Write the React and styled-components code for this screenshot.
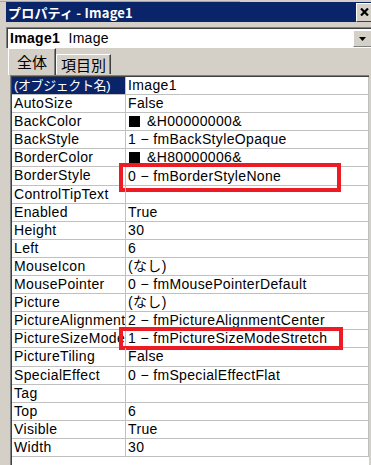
import React from "react";
import styled, { createGlobalStyle } from "styled-components";

const GlobalStyle = createGlobalStyle`
  html, body {
    margin: 0;
    padding: 0;
    background: #d4d0c8;
  }
  body {
    font-family: "Liberation Sans", "Noto Sans CJK JP", sans-serif;
  }
`;

const rows = [
  { name: "(オブジェクト名)", value: "Image1", selected: true, jpName: true },
  { name: "AutoSize", value: "False" },
  { name: "BackColor", value: "&H00000000&", swatch: true },
  { name: "BackStyle", value: "1 − fmBackStyleOpaque" },
  { name: "BorderColor", value: "&H80000006&", swatch: true },
  { name: "BorderStyle", value: "0 − fmBorderStyleNone", mark: { top: -4, height: 29, width: 222 } },
  { name: "ControlTipText", value: "" },
  { name: "Enabled", value: "True" },
  { name: "Height", value: "30" },
  { name: "Left", value: "6" },
  { name: "MouseIcon", value: "(なし)" },
  { name: "MousePointer", value: "0 − fmMousePointerDefault" },
  { name: "Picture", value: "(なし)" },
  { name: "PictureAlignment", value: "2 − fmPictureAlignmentCenter" },
  { name: "PictureSizeMode", value: "1 − fmPictureSizeModeStretch", mark: { top: -3, height: 23, width: 224 } },
  { name: "PictureTiling", value: "False" },
  { name: "SpecialEffect", value: "0 − fmSpecialEffectFlat" },
  { name: "Tag", value: "" },
  { name: "Top", value: "6" },
  { name: "Visible", value: "True" },
  { name: "Width", value: "30" },
];

const App = () => {
  return (
    <>
      <GlobalStyle />
      <Window>
        <TopEdge />
        <TitleBar>
          <Title>プロパティ - Image1</Title>
          <CloseButton>
            <svg width="9" height="8" viewBox="0 0 9 8">
              <path d="M1 0.5l7 7M8 0.5l-7 7" stroke="#000" strokeWidth="2.2" />
            </svg>
          </CloseButton>
        </TitleBar>
        <Combo>
          <ComboText>
            <b>Image1</b>&nbsp; Image
          </ComboText>
          <DropButton>
            <svg width="7" height="4" viewBox="0 0 7 4">
              <path d="M0 0h7L3.5 4z" fill="#000" />
            </svg>
          </DropButton>
        </Combo>
        <Tabs>
          <Tab active>全体</Tab>
          <Tab>項目別</Tab>
        </Tabs>
        <Grid>
          {rows.map((r) => (
            <Row key={r.name}>
              <NameCell selected={r.selected} jp={r.jpName}>
                {r.name}
              </NameCell>
              <ValueCell>
                {r.swatch && <Swatch />}
                {r.value}
              </ValueCell>
              {r.mark && (
                <Mark
                  style={{ top: r.mark.top, height: r.mark.height, width: r.mark.width }}
                />
              )}
            </Row>
          ))}
        </Grid>
      </Window>
    </>
  );
};

const Window = styled.div`
  width: 371px;
  height: 465px;
  overflow: hidden;
  display: flex;
  flex-direction: column;
  background: #d4d0c8;
`;

const TopEdge = styled.div`
  height: 2px;
  background: linear-gradient(to right, #a8a49c 0, #a8a49c 240px, #d4d0c8 240px);
  background-size: 100% 1px;
  background-repeat: no-repeat;
  background-position: 0 1px;
`;

const TitleBar = styled.div`
  height: 20px;
  margin-left: 6px;
  background: #0a246a;
  display: flex;
  align-items: center;
  justify-content: space-between;
`;

const Title = styled.span`
  color: #fff;
  font-family: "Noto Sans CJK JP", sans-serif;
  font-weight: 700;
  font-size: 13px;
  padding-left: 2px;
  letter-spacing: 0.2px;
`;

const CloseButton = styled.div`
  width: 14px;
  height: 17px;
  background: #d4d0c8;
  border-top: 1px solid #fff;
  border-left: 1px solid #fff;
  border-bottom: 1px solid #404040;
  display: flex;
  align-items: center;
  justify-content: center;
`;

const Combo = styled.div`
  height: 20px;
  margin: 5px 0 0 6px;
  background: #fff;
  border-top: 1px solid #808080;
  border-left: 1px solid #808080;
  box-shadow: inset 1px 1px 0 #404040;
  display: flex;
  align-items: center;
  justify-content: space-between;
`;

const ComboText = styled.div`
  font-size: 14px;
  padding-left: 3px;
  color: #000;
  letter-spacing: 0.3px;
  b {
    font-weight: 700;
  }
`;

const DropButton = styled.div`
  width: 17px;
  height: 15px;
  margin-top: 1px;
  background: #d4d0c8;
  border-top: 1px solid #fff;
  border-left: 1px solid #fff;
  border-bottom: 1px solid #808080;
  display: flex;
  align-items: center;
  justify-content: center;
`;

const Tabs = styled.div`
  height: 27px;
  margin-left: 8px;
  display: flex;
  align-items: flex-end;
`;

const Tab = styled.div`
  height: ${(p) => (p.active ? "24px" : "19px")};
  padding: 0 ${(p) => (p.active ? "8px" : "4px")} ${(p) => (p.active ? "2px" : "0")};
  margin-bottom: ${(p) => (p.active ? "0" : "1px")};
  background: #d4d0c8;
  border-top: 1px solid #fff;
  border-left: 1px solid #fff;
  border-right: 1px solid #404040;
  box-shadow: inset -1px 0 0 #808080;
  display: flex;
  align-items: center;
  font-family: "Noto Sans CJK JP", sans-serif;
  font-size: 15px;
  color: #000;
`;

const Grid = styled.div`
  flex: 1;
  margin: 0 2px 0 10px;
  background: #fff;
  border-top: 1px solid #808080;
  border-left: 1px solid #808080;
  box-shadow: inset 1px 1px 0 #404040;
  padding: 1px 0 0 1px;
`;

const Row = styled.div`
  position: relative;
  height: 17.1px;
  display: flex;
  border-bottom: 1px solid #c0c0c0;
  font-size: 14px;
  line-height: 17px;
  letter-spacing: 0.35px;
  color: #000;
`;

const NameCell = styled.div`
  width: 111px;
  padding-left: 2px;
  border-right: 1px solid #c0c0c0;
  white-space: nowrap;
  overflow: hidden;
  font-size: ${(p) => (p.jp ? "13px" : "inherit")};
  letter-spacing: ${(p) => (p.jp ? "-0.4px" : "inherit")};
  background: ${(p) => (p.selected ? "#0a246a" : "transparent")};
  color: ${(p) => (p.selected ? "#fff" : "#000")};
`;

const ValueCell = styled.div`
  flex: 1;
  padding-left: 2px;
  display: flex;
  align-items: center;
  white-space: nowrap;
  border-right: 1px solid #c0c0c0;
`;

const Swatch = styled.span`
  width: 11px;
  height: 11px;
  background: #000;
  margin: 0 7px 0 1px;
`;

const Mark = styled.div`
  position: absolute;
  left: 107px;
  box-sizing: border-box;
  border: 4px solid #ed1c24;
  pointer-events: none;
`;

export default App;
